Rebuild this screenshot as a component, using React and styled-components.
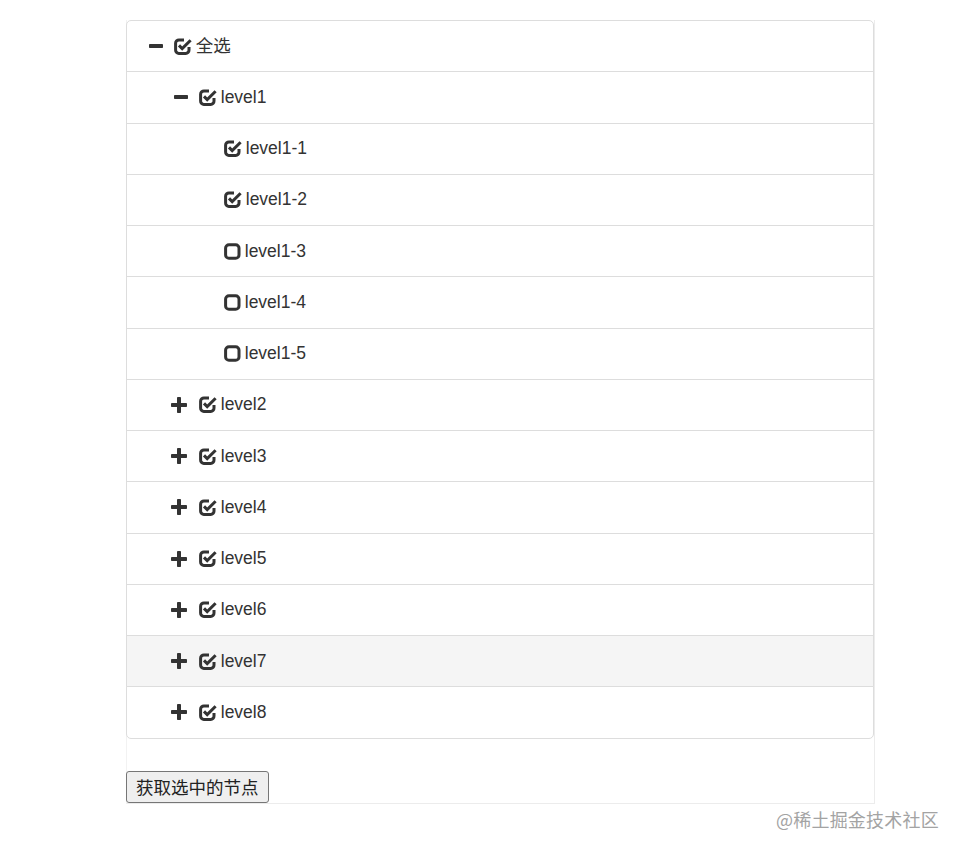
import React from "react";
import styled, { createGlobalStyle } from "styled-components";

const Global = createGlobalStyle`
  html, body { margin: 0; padding: 0; background: #fff; }
  body {
    font-family: "Liberation Sans", Arial, "Noto Sans CJK SC", sans-serif;
    color: #333;
  }
`;

const Page = styled.div`
  position: relative;
  width: 960px;
  height: 853px;
  padding-top: 20px;
  box-sizing: border-box;
`;

const Panel = styled.div`
  margin-left: 126px;
  width: 749px;
  box-sizing: border-box;
  border-right: 1px solid #ececec;
  border-bottom: 1px solid #ececec;
  border-left: 1px solid #f2f2f2;
  display: flex;
  flex-direction: column;
  align-items: flex-start;
`;

const List = styled.ul`
  list-style: none;
  margin: 0 0 32px -1px;
  padding: 0;
  width: calc(100% + 1px);
`;

const Item = styled.li`
  position: relative;
  display: flex;
  align-items: center;
  padding: 12.64px 18.75px;
  line-height: 25px;
  font-size: 17.5px;
  border: 1px solid #ddd;
  margin-bottom: -1px;
  background: ${(p) => (p.$hover ? "#f5f5f5" : "#fff")};
  &:first-child { border-top-left-radius: 5px; border-top-right-radius: 5px; }
  &:last-child { border-bottom-left-radius: 5px; border-bottom-right-radius: 5px; margin-bottom: 0; }
`;

const Indent = styled.span`
  display: inline-block;
  flex: none;
  width: 25px;
  height: 25px;
`;

const ExpandSlot = styled.span`
  flex: none;
  width: 25px;
  height: 25px;
  display: flex;
  align-items: center;
  svg { margin-left: ${(p) => p.$offset}px; }
`;

const CheckSlot = styled.span`
  flex: none;
  display: flex;
  align-items: center;
  padding: 0 4px 0 3px;
  height: 25px;
`;

const Label = styled.span`
  white-space: nowrap;
  font-family: "Liberation Sans", Arial, "Noto Sans CJK SC", sans-serif;
`;

const Button = styled.button`
  font-family: "Noto Sans CJK SC", "Liberation Sans", sans-serif;
  font-size: 17.5px;
  color: #222;
  height: 32px;
  padding: 0 9px;
  line-height: 28px;
  background: #efefef;
  border: 1px solid #767676;
  border-radius: 3px;
  margin-left: -1px;
`;

const Watermark = styled.div`
  position: absolute;
  left: 776px;
  top: 807px;
  font-family: "Noto Sans CJK SC", sans-serif;
  font-size: 18px;
  line-height: 24px;
  color: #a3a3a3;
  letter-spacing: 0.2px;
`;

const Minus = () => (
  <svg width="14" height="4" viewBox="0 0 14 4">
    <rect x="0" y="0" width="14" height="4" rx="0.8" fill="#333" />
  </svg>
);

const Plus = () => (
  <svg width="16" height="16" viewBox="0 0 16 16">
    <rect x="6" y="0" width="4" height="16" rx="0.8" fill="#333" />
    <rect x="0" y="6" width="16" height="4" rx="0.8" fill="#333" />
  </svg>
);

const Checked = () => (
  <svg width="18" height="17" viewBox="0 0 18 17" fill="none" stroke="#333" strokeWidth="3">
    <path d="M10 2 H5 A3.3 3.3 0 0 0 1.6 5.3 V12 A3.3 3.3 0 0 0 5 15.4 H11.6 A3.3 3.3 0 0 0 15 12 V9" />
    <path d="M5 7.4 L8.2 10.6 L16.6 2.2" strokeLinejoin="miter" />
  </svg>
);

const Unchecked = () => (
  <svg width="17" height="17" viewBox="0 0 17 17" fill="none" stroke="#333" strokeWidth="3">
    <rect x="1.6" y="1.7" width="13.4" height="13.6" rx="3.4" />
  </svg>
);

const nodes = [
  { label: "全选", level: 0, expand: "minus", checked: true },
  { label: "level1", level: 1, expand: "minus", checked: true },
  { label: "level1-1", level: 2, checked: true },
  { label: "level1-2", level: 2, checked: true },
  { label: "level1-3", level: 2, checked: false },
  { label: "level1-4", level: 2, checked: false },
  { label: "level1-5", level: 2, checked: false },
  { label: "level2", level: 1, expand: "plus", checked: true },
  { label: "level3", level: 1, expand: "plus", checked: true },
  { label: "level4", level: 1, expand: "plus", checked: true },
  { label: "level5", level: 1, expand: "plus", checked: true },
  { label: "level6", level: 1, expand: "plus", checked: true },
  { label: "level7", level: 1, expand: "plus", checked: true, hover: true },
  { label: "level8", level: 1, expand: "plus", checked: true },
];

export default function App() {
  return (
    <Page>
      <Global />
      <Panel>
        <List>
          {nodes.map((n) => (
            <Item key={n.label} $hover={n.hover}>
              {Array.from({ length: n.level }).map((_, i) => (
                <Indent key={i} />
              ))}
              <ExpandSlot $offset={n.expand === "plus" ? 0.5 : 3}>
                {n.expand === "minus" && <Minus />}
                {n.expand === "plus" && <Plus />}
              </ExpandSlot>
              <CheckSlot>{n.checked ? <Checked /> : <Unchecked />}</CheckSlot>
              <Label>{n.label}</Label>
            </Item>
          ))}
        </List>
        <Button>获取选中的节点</Button>
      </Panel>
      <Watermark>@稀土掘金技术社区</Watermark>
    </Page>
  );
}
